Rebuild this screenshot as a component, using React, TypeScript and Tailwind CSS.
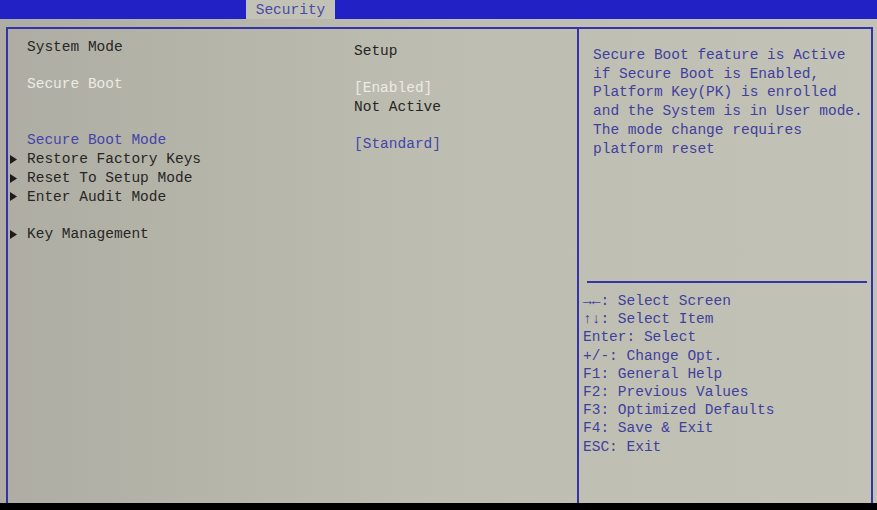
import React from 'react';

type Row = {
  arrow?: boolean;
  label?: string;
  value?: string;
  labelTone?: 'dark' | 'white' | 'blue';
  valueTone?: 'dark' | 'white' | 'blue';
};

const rows: Row[] = [
  { label: 'System Mode', value: 'Setup' },
  {},
  { label: 'Secure Boot', labelTone: 'white', value: '[Enabled]', valueTone: 'white' },
  { value: 'Not Active' },
  {},
  { label: 'Secure Boot Mode', labelTone: 'blue', value: '[Standard]', valueTone: 'blue' },
  { arrow: true, label: 'Restore Factory Keys' },
  { arrow: true, label: 'Reset To Setup Mode' },
  { arrow: true, label: 'Enter Audit Mode' },
  {},
  { arrow: true, label: 'Key Management' },
];

const tone = {
  dark: 'text-[#262624]',
  white: 'text-[#ecebe4]',
  blue: 'text-[#4444aa]',
};

const helpTop = [
  'Secure Boot feature is Active',
  'if Secure Boot is Enabled,',
  'Platform Key(PK) is enrolled',
  'and the System is in User mode.',
  'The mode change requires',
  'platform reset',
];

const helpKeys = [
  '→←: Select Screen',
  '↑↓: Select Item',
  'Enter: Select',
  '+/-: Change Opt.',
  'F1: General Help',
  'F2: Previous Values',
  'F3: Optimized Defaults',
  'F4: Save & Exit',
  'ESC: Exit',
];

function Arrow() {
  return (
    <svg width="7" height="9" viewBox="0 0 7 9" className="block">
      <path d="M0 0 L7 4.5 L0 9 Z" fill="#1c1c1c" />
    </svg>
  );
}

export default function App() {
  return (
    <div
      className="w-[877px] h-[510px] bg-black overflow-hidden flex flex-col text-[14.5px]"
      style={{ fontFamily: '"Liberation Mono", "DejaVu Sans Mono", monospace' }}
    >
      {/* Top menu bar */}
      <div className="h-[19px] bg-[#2121c6] flex shrink-0">
        <div className="ml-[246px] w-[89px] h-[20px] bg-[#c3c2b6] text-[#4a4aa8] flex items-center justify-center leading-none pt-[1px]">
          Security
        </div>
      </div>

      {/* Body */}
      <div className="h-[484px] bg-gradient-to-r from-[#aeada3] via-[#bebdb1] to-[#c3c2b7] pt-[8px] flex">
        <div className="ml-[6px] w-[867px] h-full border-l-2 border-t-2 border-r-2 border-[#3434a8] flex">
          {/* Left settings column */}
          <div className="w-[569px] pt-[9px]">
            {rows.map((r, i) => (
              <div key={i} className="flex h-[18.7px] leading-[18.7px]">
                <div className="w-[19px] pl-[2px] flex items-center">{r.arrow && <Arrow />}</div>
                <div className={`w-[327px] ${tone[r.labelTone ?? 'dark']}`}>{r.label}</div>
                <div className={`pt-[4px] ${tone[r.valueTone ?? 'dark']}`}>{r.value}</div>
              </div>
            ))}
          </div>

          {/* Help column */}
          <div className="flex-1 border-l-2 border-[#3434a8] flex flex-col text-[#3f3f9e]">
            <div className="h-[252px] pt-[17px] pl-[14px] leading-[18.7px]">
              {helpTop.map((t) => (
                <div key={t}>{t}</div>
              ))}
            </div>
            <div className="ml-[8px] mr-[4px] h-[2px] bg-[#3434a8]" />
            <div className="pt-[9px] pl-[4px] leading-[18.2px]">
              {helpKeys.map((t) => (
                <div key={t} className="whitespace-pre">
                  {t}
                </div>
              ))}
            </div>
          </div>
        </div>
      </div>
    </div>
  );
}
